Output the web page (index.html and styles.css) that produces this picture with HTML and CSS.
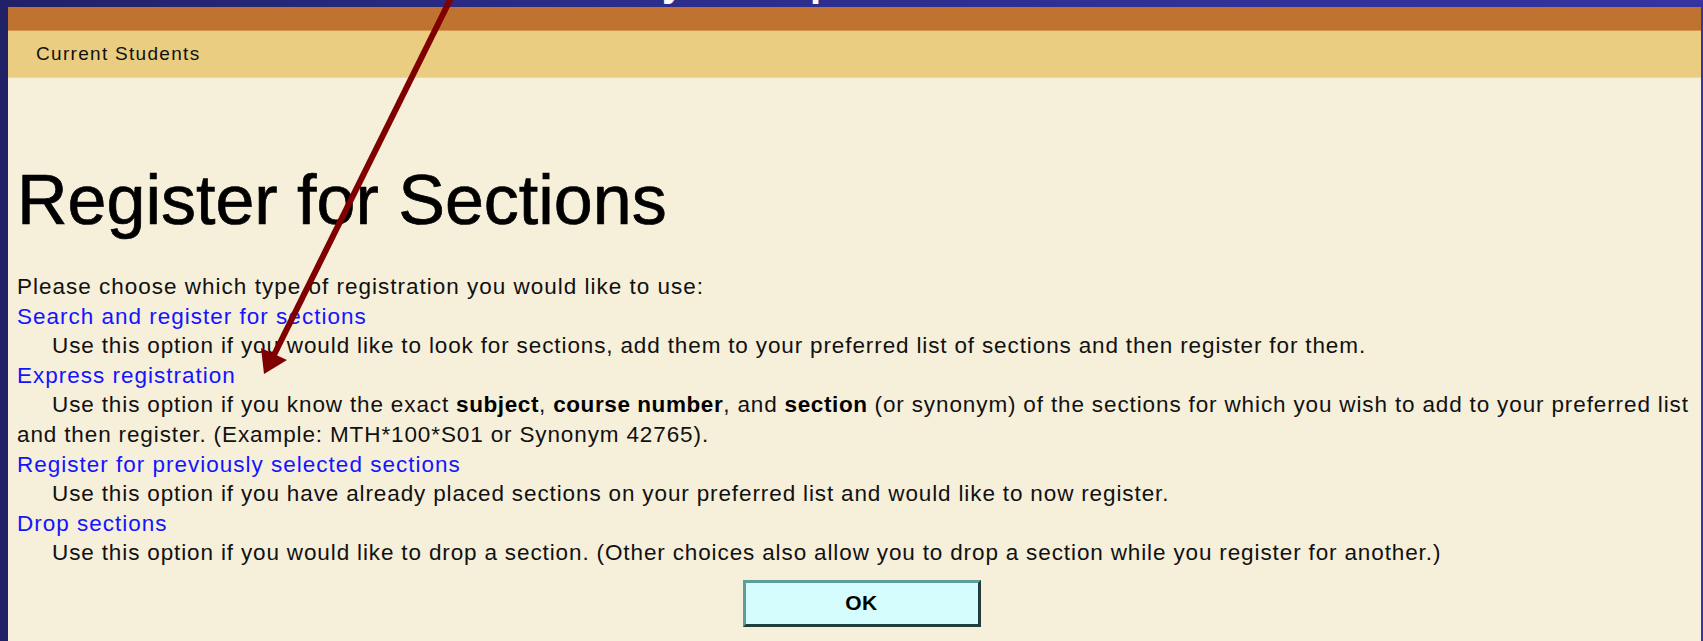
FILE: index.html
```html
<!DOCTYPE html>
<html lang="en">
<head>
<meta charset="utf-8">
<title>Register for Sections</title>
<link rel="stylesheet" href="styles.css">
</head>
<body>
<div class="slide-title"><span class="g1">y</span><span class="g2">p</span></div>
<div class="frame">
  <div class="topbar"></div>
  <div class="crumb">Current Students</div>
  <main class="content">
    <h1 class="title">Register for Sections</h1>
    <p class="intro">Please choose which type of registration you would like to use:</p>
    <a class="opt" href="#">Search and register for sections</a>
    <p class="desc">Use this option if you would like to look for sections, add them to your preferred list of sections and then register for them.</p>
    <a class="opt" href="#">Express registration</a>
    <p class="desc">Use this option if you know the exact <b>subject</b>, <b>course number</b>, and <b>section</b> (or synonym) of the sections for which you wish to add to your preferred list and then register. (Example: MTH*100*S01 or Synonym 42765).</p>
    <a class="opt" href="#">Register for previously selected sections</a>
    <p class="desc">Use this option if you have already placed sections on your preferred list and would like to now register.</p>
    <a class="opt" href="#">Drop sections</a>
    <p class="desc">Use this option if you would like to drop a section. (Other choices also allow you to drop a section while you register for another.)</p>
    <div class="actions"><button class="ok" type="button">OK</button></div>
  </main>
</div>
<svg class="pointer" width="1703" height="641" viewBox="0 0 1703 641" aria-hidden="true">
  <line x1="452" y1="-4" x2="274" y2="355" stroke="#7f0000" stroke-width="6"/>
  <polygon points="264,374 261,348 287,360" fill="#7f0000"/>
</svg>
</body>
</html>
```
FILE: styles.css
```css
html, body {
  margin: 0;
  padding: 0;
}

body {
  height: 641px;
  overflow: hidden;
  background: linear-gradient(90deg, #212168 0%, #2c2c8a 35%, #3434a2 100%);
  position: relative;
  font-family: "Liberation Sans", Arial, sans-serif;
}

.frame {
  margin: 7px 2px 0 8px;
  height: 634px;
  background: #f6efda;
  display: flex;
  flex-direction: column;
}

.topbar {
  height: 23px;
  background: #c07330;
  border-bottom: 1px solid #d2964f;
}

.crumb {
  height: 47px;
  background: #eacd80;
  border-bottom: 1px solid #efd99a;
  padding-left: 28px;
  box-sizing: border-box;
  display: flex;
  align-items: center;
  font-size: 19px;
  letter-spacing: 1.3px;
  color: #111;
}

.content {
  padding: 0 0 0 9px;
  color: #111;
  font-size: 22.5px;
  line-height: 29.6px;
  letter-spacing: 1px;
}

.title {
  margin: 87px 0 0;
  font-size: 70px;
  line-height: 70px;
  font-weight: normal;
  letter-spacing: 0;
  color: #000;
  -webkit-text-stroke: 0.7px #000;
}

.intro {
  margin: 37px 0 0;
}

.opt {
  display: block;
  color: #1414ff;
  text-decoration: none;
}

.desc {
  margin: 0;
  text-indent: 35px;
  letter-spacing: 0.9px;
  word-spacing: -0.2px;
}

.desc b {
  font-weight: bold;
  color: #000;
  letter-spacing: 0.6px;
}

.actions {
  display: flex;
  justify-content: center;
  padding-left: 5px;
  margin-top: 12px;
}

.ok {
  width: 238px;
  height: 47px;
  background: #d4fcfc;
  border: 3px solid;
  border-color: #5f9c9c #233c3c #233c3c #5f9c9c;
  font-family: "Liberation Sans", Arial, sans-serif;
  font-size: 21px;
  font-weight: bold;
  color: #000;
  letter-spacing: 0.5px;
  padding: 0;
}

.slide-title {
  position: absolute;
  top: -38px;
  left: 0;
  width: 100%;
  height: 40px;
  font-size: 40px;
  line-height: 40px;
  font-weight: bold;
  color: #fff;
  z-index: 2;
}

.slide-title span {
  position: absolute;
  top: 0;
}

.slide-title .g1 { left: 662px; }
.slide-title .g2 { left: 810px; }

.pointer {
  position: absolute;
  top: 0;
  left: 0;
  z-index: 3;
  pointer-events: none;
}
```
